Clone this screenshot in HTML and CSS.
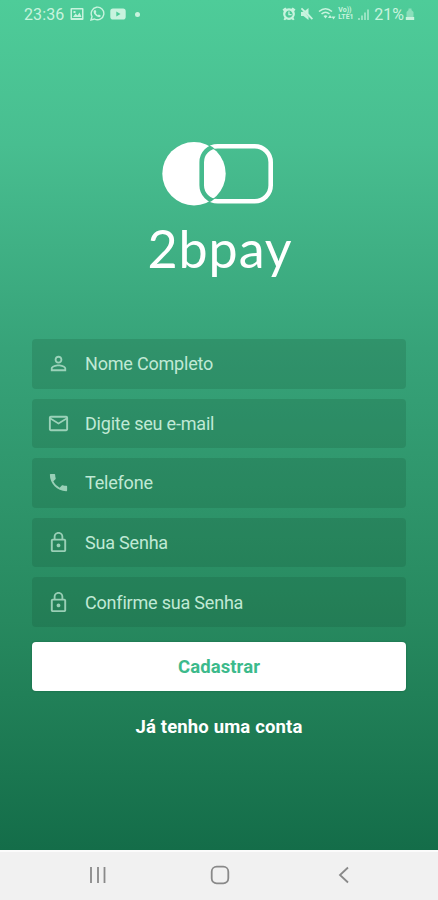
FILE: index.html
```html
<!DOCTYPE html>
<html lang="pt-BR">
<head>
	<meta charset="UTF-8">
	<meta name="viewport" content="width=device-width, initial-scale=1">
	<title>2bpay</title>
	<link rel="stylesheet" href="styles.css">
</head>
<body>
	<div class="app">
		<!-- barra de status -->
		<header class="status">
			<span class="time">23:36</span>
			<svg class="s-img" width="14" height="14" viewBox="0 0 14 14"><path fill-rule="evenodd" d="M1.500 1h11q1 0 1 1v10q0 1-1 1h-11q-1 0-1-1V2q0-1 1-1zM2 2.500V11h10V2.500zM3 10l2.500-3.500 2 2L9.500 5.500 11.500 10zM3.500 4h2v2h-2z"/></svg>
			<svg class="s-wa" width="16" height="16" viewBox="0 0 16 16"><path d="M2 14l1-3.500A6.300 6.300 0 1 1 5.500 13z" fill="none" stroke="currentColor" stroke-width="1.400"/><path d="M5.300 4.300l1.200-.2.900 2-.7.900q.8 1.500 2.200 2.200l.9-.8 1.900 1-.3 1.300q-1.500 1.200-4.200-.7-2.900-2.500-2.600-4.300.1-.9.700-1.400z"/></svg>
			<svg class="s-yt" width="16" height="12" viewBox="0 0 16 12"><path fill-rule="evenodd" d="M3 .5h10q2.700 0 2.700 2.800v5.400q0 2.800-2.700 2.800H3Q.3 11.500.3 8.700V3.300Q.3.500 3 .5zM6.300 3.500v5L10.500 6z"/></svg>
			<span class="dot"></span>
			<div class="right">
				<svg width="14" height="14" viewBox="0 0 14 14"><path fill-rule="evenodd" d="M.5 2.500l2.800-2 1.200 1.200a6 6 0 0 1 5 0L10.700.5l2.800 2-1.300 1.800a6 6 0 0 1-.7 6.400l1 1.800-1.500.8-1.300-1.100a6 6 0 0 1-5.400 0L3 13.300l-1.500-.8 1-1.800a6 6 0 0 1-.7-6.400zM7 3.600a3.600 3.600 0 1 0 .01 0zM6.300 4.500h1.300V7h2v1.200H6.300z"/></svg>
				<svg width="14" height="14" viewBox="0 0 14 14"><path d="M1 5h2.500L8.500 1v5.500L13 11.500l-1.200 1.200L.8 2 2 .8l4 3.800zM1 5v4h2.500l5 4v-3L4 5z"/></svg>
				<svg class="wifi" width="18" height="14" viewBox="0 0 18 14"><path d="M1 4.500q6.500-5.500 13 0M3.500 7q4-3.500 8 0" fill="none" stroke="currentColor" stroke-width="1.600"/><path d="M5.500 9q2-1.600 4 0l-2 2.500zM12 8l2 3h-4zM15.500 12.500l-2-3h4z"/></svg>
				<span class="volte"><b>Vo))</b><b>LTE1</b></span>
				<svg class="signal" width="13" height="13" viewBox="0 0 13 13"><path d="M1 12h2v-2H1zM4 12h2V7.500H4zM7 12h2V4.500H7zM10 12h2V1.500h-2z"/></svg>
				<span class="pct">21%</span>
				<svg width="10" height="14" viewBox="0 0 10 14"><path opacity=".5" d="M3.500 1.500h3V3l2 2v5h-7V5l2-2z"/><path d="M.8 10h8.400v3H.8z"/></svg>
			</div>
		</header>

		<!-- logo -->
		<div class="logo">
			<svg width="112" height="66" viewBox="0 0 112 66">
				<defs>
					<mask id="ring">
						<rect width="112" height="66" fill="#fff"/>
						<rect x="39.700" y="5.200" width="69" height="55" rx="16" fill="none" stroke="#000" stroke-width="4.600"/>
					</mask>
					<mask id="outside">
						<rect width="112" height="66" fill="#fff"/>
						<circle cx="32" cy="32.700" r="32.500" fill="#000"/>
					</mask>
				</defs>
				<circle cx="32" cy="32.700" r="31.700" mask="url(#ring)"/>
				<rect x="39.700" y="5.200" width="69" height="55" rx="16" fill="none" stroke="currentColor" stroke-width="4.600" mask="url(#outside)"/>
			</svg>
			<h1>2bpay</h1>
		</div>

		<!-- cadastro -->
		<form class="form">
			<label class="field">
				<svg width="24" height="24" viewBox="0 0 24 24"><path d="M12 5.900a2.100 2.100 0 1 1 0 4.200 2.100 2.100 0 0 1 0-4.200m0 9c2.970 0 6.100 1.460 6.100 2.100v1.100H5.900V17c0-.640 3.130-2.100 6.100-2.100M12 4C9.790 4 8 5.790 8 8s1.790 4 4 4 4-1.790 4-4-1.790-4-4-4zm0 9c-2.670 0-8 1.340-8 4v3h16v-3c0-2.660-5.330-4-8-4z"/></svg>
				<span>Nome Completo</span>
			</label>
			<label class="field">
				<svg width="24" height="24" viewBox="0 0 24 24"><path d="M20 4H4c-1.100 0-2 .9-2 2v12c0 1.100.9 2 2 2h16c1.100 0 2-.9 2-2V6c0-1.100-.9-2-2-2zm0 14H4V8l8 5 8-5v10zm-8-7L4 6h16l-8 5z"/></svg>
				<span>Digite seu e-mail</span>
			</label>
			<label class="field">
				<svg width="24" height="24" viewBox="0 0 24 24"><path d="M6.620 10.790c1.440 2.830 3.760 5.140 6.590 6.590l2.200-2.200c.270-.270.670-.360 1.020-.240 1.120.370 2.330.570 3.570.570.550 0 1 .450 1 1V20c0 .550-.450 1-1 1-9.390 0-17-7.610-17-17 0-.550.450-1 1-1h3.500c.550 0 1 .450 1 1 0 1.250.2 2.450.570 3.570.110.350.030.740-.250 1.020l-2.200 2.200z"/></svg>
				<span>Telefone</span>
			</label>
			<label class="field">
				<svg width="24" height="24" viewBox="0 0 24 24"><path d="M18 8h-1V6c0-2.760-2.240-5-5-5S7 3.240 7 6v2H6c-1.100 0-2 .9-2 2v10c0 1.100.9 2 2 2h12c1.100 0 2-.9 2-2V10c0-1.100-.9-2-2-2zM8.900 6a3.100 3.100 0 0 1 6.200 0v2H8.900V6zM18 20H6V10h12v10zm-6-3c1.100 0 2-.9 2-2s-.9-2-2-2-2 .9-2 2 .9 2 2 2z"/></svg>
				<span>Sua Senha</span>
			</label>
			<label class="field">
				<svg width="24" height="24" viewBox="0 0 24 24"><path d="M18 8h-1V6c0-2.760-2.240-5-5-5S7 3.240 7 6v2H6c-1.100 0-2 .9-2 2v10c0 1.100.9 2 2 2h12c1.100 0 2-.9 2-2V10c0-1.100-.9-2-2-2zM8.900 6a3.100 3.100 0 0 1 6.200 0v2H8.900V6zM18 20H6V10h12v10zm-6-3c1.100 0 2-.9 2-2s-.9-2-2-2-2 .9-2 2 .9 2 2 2z"/></svg>
				<span>Confirme sua Senha</span>
			</label>
			<button type="button" class="submit">Cadastrar</button>
			<a class="login">Já tenho uma conta</a>
		</form>
	</div>

	<!-- barra de navegação do android -->
	<nav class="nav">
		<svg width="20" height="20" viewBox="0 0 20 20"><path d="M4 2v16M11 2v16M17.500 2v16"/></svg>
		<svg width="20" height="20" viewBox="0 0 20 20"><rect x="1.700" y="1.700" width="16.600" height="16.600" rx="5"/></svg>
		<svg width="20" height="20" viewBox="0 0 20 20"><path d="M15 2.500L7 10l8 7.500"/></svg>
	</nav>
</body>
</html>
```
FILE: styles.css
```css
html,
body{
	margin: 0;
	padding: 0;
	height: 100%;
}
body{
	display: flex;
	flex-direction: column;
	font-family: Roboto, "Liberation Sans", sans-serif;
	color: #fff;
	overflow: hidden;
}
svg{
	fill: currentColor;
	flex: none;
}
.app{
	flex: 1;
	background: linear-gradient(#4ecc99 0%, #48be90 17%, #37a379 41%, #27895f 73%, #146d49 100%);
}
.status{
	height: 28px;
	display: flex;
	align-items: center;
	padding: 0 23px 0 24px;
	font-size: 16px;
	color: #c8f3de;
}
.time{
	letter-spacing: 0.1px;
	width: 46px;
}
.s-wa{
	margin-left: 5px;
}
.s-yt{
	margin-left: 5px;
}
.dot{
	width: 5px;
	height: 5px;
	margin-left: 9px;
	border-radius: 50%;
	background: #c8f3de;
}
.right{
	display: flex;
	align-items: center;
	margin-left: auto;
}
.right svg + svg{
	margin-left: 4px;
}
.volte{
	display: flex;
	flex-direction: column;
	margin-left: 2px;
	width: 17px;
	font-size: 7px;
	line-height: 7px;
}
.signal{
	opacity: 0.6;
	margin-left: 2px;
}
.pct{
	margin: 0 1px 0 4px;
}
.logo{
	display: flex;
	flex-direction: column;
	align-items: center;
	padding: 113px 3px 0 0;
}
.logo h1{
	margin: 7px 0 0 5px;
	font-family: Lato, sans-serif;
	font-size: 52px;
	line-height: 68px;
	font-weight: 400;
	letter-spacing: 0.9px;
}
.form{
	display: flex;
	flex-direction: column;
	gap: 10px;
	padding: 0 32px;
	margin-top: 57px;
}
.field{
	height: 49.6px;
	box-sizing: border-box;
	display: flex;
	align-items: center;
	padding-left: 15px;
	border-radius: 4px;
	background: rgba(20, 80, 50, 0.2);
	color: #c0e9d5;
	font-size: 18px;
	letter-spacing: -0.2px;
}
.field svg{
	width: 23px;
	height: 23px;
	margin-right: 15px;
	opacity: 0.75;
}
.submit{
	height: 49px;
	margin-top: 5px;
	padding-top: 3px;
	border: none;
	border-radius: 4px;
	background: #fff;
	color: #3cba8b;
	font-family: inherit;
	font-size: 18.5px;
	font-weight: 700;
	letter-spacing: 0.1px;
	box-shadow: 0 0 2px rgba(0, 70, 40, 0.5);
}
.login{
	margin-top: 15px;
	text-align: center;
	font-size: 18.5px;
	line-height: 22px;
	font-weight: 700;
	letter-spacing: 0.15px;
}
.nav{
	height: 50px;
	box-sizing: border-box;
	display: flex;
	align-items: center;
	justify-content: space-between;
	padding: 0 85px 2px 87px;
	border-top: 2px solid #fbfbfb;
	background: #f1f1f1;
	color: #898989;
}
.nav svg{
	fill: none;
	stroke: currentColor;
	stroke-width: 1.8;
}
```
